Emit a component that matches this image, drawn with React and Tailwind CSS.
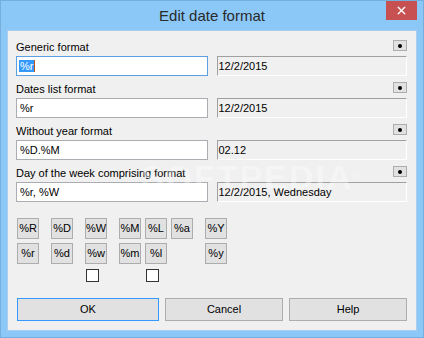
import { X } from "lucide-react";

const font = { fontFamily: '"Liberation Sans", Arial, sans-serif' };

const groups = [
  { label: "Generic format", value: "%r", preview: "12/2/2015", focused: true },
  { label: "Dates list format", value: "%r", preview: "12/2/2015" },
  { label: "Without year format", value: "%D.%M", preview: "02.12" },
  { label: "Day of the week comprising format", value: "%r, %W", preview: "12/2/2015, Wednesday" },
];

// columns of the little format buttons, with the left gap before each column
const columns = [
  { gap: "ml-[1px]", items: ["%R", "%r"] },
  { gap: "ml-[12px]", items: ["%D", "%d"] },
  { gap: "ml-[12px]", items: ["%W", "%w"], check: true },
  { gap: "ml-[12px]", items: ["%M", "%m"] },
  { gap: "ml-[4px]", items: ["%L", "%l"], check: true },
  { gap: "ml-[4px]", items: ["%a"] },
  { gap: "ml-[12px]", items: ["%Y", "%y"] },
];

function FormatGroup({ label, value, preview, focused }) {
  return (
    <div className="flex flex-col">
      <div className="flex justify-between items-start h-[16px]">
        <span className="text-[11px] leading-[14px] text-black">{label}</span>
        <button className="w-[14px] h-[11px] border border-[#adadad] bg-[#e1e1e1] flex items-center justify-center">
          <span className="w-[4px] h-[4px] rounded-full bg-black" />
        </button>
      </div>
      <div className="flex gap-[9px] h-[20px]">
        <div
          className={`w-[192px] h-full bg-white border ${
            focused ? "border-[#5d9fe3]" : "border-[#abadb3]"
          } flex items-center pl-[2px] text-[11px] text-black`}
        >
          {focused ? (
            <span className="bg-[#3399ff] text-white leading-[12px] px-[1px] border-r border-[#b4561d]">{value}</span>
          ) : (
            <span className="pl-[1px]">{value}</span>
          )}
        </div>
        <div className="w-[191px] h-full border-t border-l border-[#a0a0a0] border-b border-r border-b-white border-r-white flex items-center pl-[1px] text-[11px] text-black">
          {preview}
        </div>
      </div>
    </div>
  );
}

export default function App() {
  return (
    <div style={font} className="w-[424px] h-[338px] bg-[#8bc8f8] border border-[#74afe0] flex flex-col relative overflow-hidden">
      {/* title bar */}
      <div className="h-[29px] flex items-start">
        <div className="w-[37px]" />
        <div className="flex-1 text-center text-[15px] leading-[20px] pt-[5px] text-[#2a2a2a]">Edit date format</div>
        <div className="w-[31px] h-[20px] bg-[#c75050] flex items-center justify-center mr-[6px] -mt-[1px]">
          <X size={13} strokeWidth={2.6} className="text-white" />
        </div>
      </div>

      {/* client area */}
      <div className="mx-[6px] h-[301px] bg-[#f0f0f0] border border-[#a9cdef] pt-[9px] pl-[8px] pr-[9px] flex flex-col">
        <div className="flex flex-col gap-[6px]">
          {groups.map((g) => (
            <FormatGroup key={g.label} {...g} />
          ))}
        </div>

        <div className="flex mt-[16px] h-[64px]">
          {columns.map((col, i) => (
            <div key={i} className={`${col.gap} flex flex-col gap-[4px]`}>
              {col.items.map((t) => (
                <button
                  key={t}
                  className="w-[22px] h-[21px] border border-[#adadad] bg-[#e1e1e1] text-[11px] text-black flex items-center justify-center"
                >
                  {t}
                </button>
              ))}
              {col.check && (
                <div className="ml-[1px] mt-[1px] w-[13px] h-[13px] border border-[#333] bg-white" />
              )}
            </div>
          ))}
        </div>

        <div className="flex mt-[16px] ml-[1px] gap-[6px]">
          <button className="w-[142px] h-[23px] border border-[#3399ff] bg-[#e1e1e1] text-[11px] text-black">OK</button>
          <button className="w-[118px] h-[23px] border border-[#adadad] bg-[#e1e1e1] text-[11px] text-black">Cancel</button>
          <button className="w-[118px] h-[23px] border border-[#adadad] bg-[#e1e1e1] text-[11px] text-black">Help</button>
        </div>
      </div>

      {/* faint watermark */}
      <div className="absolute left-[140px] top-[158px] text-[34px] leading-[36px] font-bold tracking-[2px] text-white opacity-35 pointer-events-none select-none">
        SOFTPEDIA<span className="text-[9px] align-top">®</span>
      </div>
    </div>
  );
}
